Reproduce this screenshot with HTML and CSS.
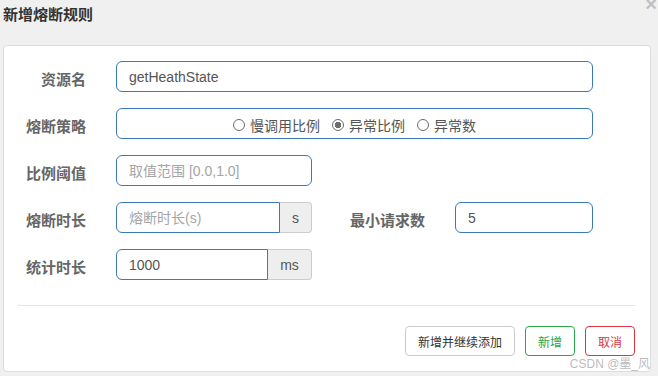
FILE: index.html
```html
<!DOCTYPE html>
<html lang="zh-CN">
  <head>
    <meta charset="UTF-8" />
    <title>新增熔断规则</title>
    <link rel="stylesheet" href="styles.css">
  </head>
  <body>
    <div class="dialog">
      <header>
        <h1>新增熔断规则</h1>
        <span class="close">×</span>
      </header>
      <main class="card">
        <form class="rule-form">
          <label class="lbl">资源名</label>
          <input class="ctrl wide" value="getHeathState">

          <label class="lbl">熔断策略</label>
          <div class="ctrl wide radios">
            <label><input type="radio" name="grade"> 慢调用比例</label>
            <label><input type="radio" name="grade" checked> 异常比例</label>
            <label><input type="radio" name="grade"> 异常数</label>
          </div>

          <label class="lbl">比例阈值</label>
          <input class="ctrl" placeholder="取值范围 [0.0,1.0]">
          <span class="fill"></span>

          <label class="lbl">熔断时长</label>
          <div class="group">
            <input class="ctrl" placeholder="熔断时长(s)">
            <span class="addon">s</span>
          </div>
          <label class="lbl">最小请求数</label>
          <input class="ctrl" value="5">

          <label class="lbl">统计时长</label>
          <div class="group">
            <input class="ctrl" value="1000">
            <span class="addon ms">ms</span>
          </div>
        </form>
        <hr>
        <div class="footer">
          <button class="btn">新增并继续添加</button>
          <button class="btn ok">新增</button>
          <button class="btn cancel">取消</button>
        </div>
      </main>
      <span class="mark">CSDN @墨_风</span>
    </div>
  </body>
</html>
```

FILE: styles.css
```css
body {
  font-family: "Liberation Sans", "Noto Sans CJK SC", sans-serif;
  background: #f0f0f0;
  margin: 0;
}
.dialog {
  position: relative;
  padding: 0 7px 0 3px;
  height: 376px;
  box-sizing: border-box;
}
header {
  display: flex;
  justify-content: space-between;
  align-items: flex-start;
  height: 45px;
}
h1 {
  margin: 5px 0 0;
  font-size: 15px;
  line-height: 20px;
  color: #333;
}
.close {
  margin: -6px -6px 0 0;
  font-size: 20px;
  font-weight: bold;
  line-height: 20px;
  color: #c0c0c0;
}
.card {
  background: #fff;
  border: 1px solid #dcdcdc;
  border-radius: 4px;
  padding: 15px 15px 14px;
  height: 327px;
  box-sizing: border-box;
}
.rule-form {
  display: grid;
  grid-template-columns: 67px 196px 83px 138px;
  column-gap: 30px;
  row-gap: 16px;
  align-items: center;
}
.lbl {
  text-align: right;
  font-size: 15px;
  font-weight: bold;
  color: #666;
  white-space: nowrap;
  padding-top: 3px;
}
.ctrl {
  box-sizing: border-box;
  height: 31px;
  border: 1px solid #3a7ab9;
  border-radius: 6px;
  padding: 0 12px;
  font: 14px "Liberation Sans", "Noto Sans CJK SC", sans-serif;
  color: #555;
  outline: none;
  width: 100%;
}
.ctrl::placeholder {
  color: #a5a5a5;
}
.wide {
  grid-column: 2 / 5;
}
.fill {
  grid-column: 3 / 5;
}
.radios {
  display: flex;
  justify-content: center;
  align-items: center;
  gap: 12px;
  padding-top: 3px;
}
.radios label {
  display: flex;
  align-items: center;
  gap: 5px;
  font-size: 14px;
  color: #555;
}
.radios input {
  appearance: none;
  margin: 0;
  width: 12px;
  height: 12px;
  border: 1px solid #6b6b6b;
  border-radius: 50%;
  box-sizing: border-box;
}
.radios input:checked {
  background: radial-gradient(circle, #6e6e6e 0 3px, #fff 3.5px);
}
.group {
  display: flex;
}
.group .ctrl {
  border-radius: 6px 0 0 6px;
  flex: 1;
  min-width: 0;
}
.addon {
  width: 32px;
  flex: none;
  height: 31px;
  box-sizing: border-box;
  border: 1px solid #ccc;
  border-left: none;
  border-radius: 0 4px 4px 0;
  background: #eee;
  color: #555;
  font-size: 14px;
  display: flex;
  align-items: center;
  justify-content: center;
}
.addon.ms {
  width: 44px;
}
hr {
  border: none;
  border-top: 1px solid #e3e3e3;
  margin: 25px 0 20px -1px;
}
.footer {
  display: flex;
  justify-content: flex-end;
  gap: 10px;
}
.btn {
  height: 30px;
  padding: 0 12px;
  background: #fff;
  border: 1px solid #ccc;
  border-radius: 4px;
  font: 12px "Liberation Sans", "Noto Sans CJK SC", sans-serif;
  color: #333;
  cursor: pointer;
}
.btn.ok {
  border-color: #28a745;
  color: #28a745;
}
.btn.cancel {
  border-color: #dc3545;
  color: #dc3545;
}
.mark {
  position: absolute;
  right: 8px;
  bottom: 5px;
  font-size: 12px;
  color: rgba(140, 140, 140, 0.6);
}
```
